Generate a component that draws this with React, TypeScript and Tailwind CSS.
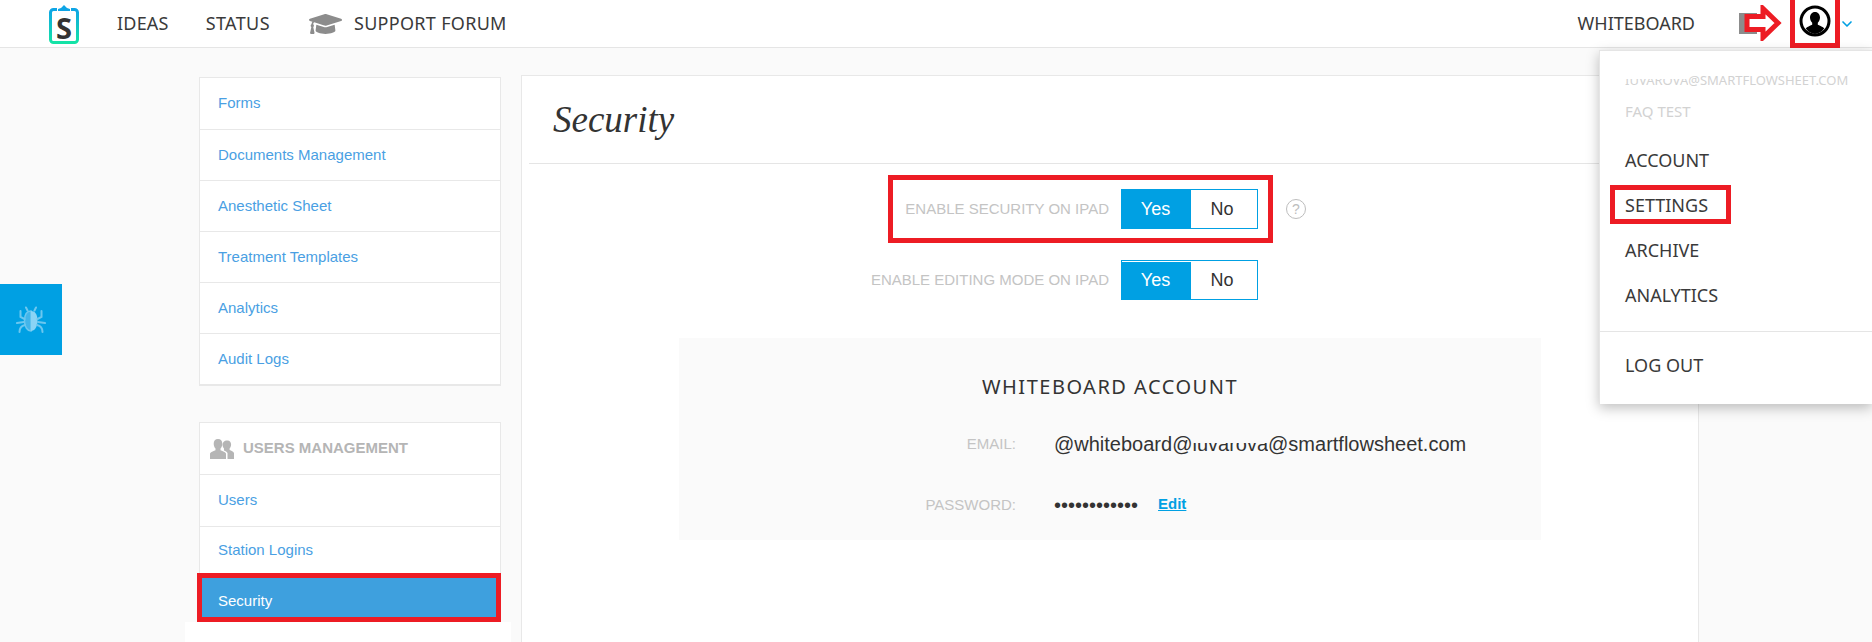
import { ChevronDown } from 'lucide-react';
import { FaGraduationCap } from 'react-icons/fa';

const formLinks = ['Forms', 'Documents Management', 'Anesthetic Sheet', 'Treatment Templates', 'Analytics', 'Audit Logs'];
const menuLinks = ['ARCHIVE', 'ANALYTICS'];

function Logo() {
  return (
    <div className="relative flex h-[40px] w-[30px] items-center justify-center">
      <svg viewBox="0 0 30 40" className="absolute inset-0 h-full w-full">
        <defs>
          <linearGradient id="logoGrad" x1="0" y1="0" x2="0" y2="1">
            <stop offset="0" stopColor="#0ea5e6" />
            <stop offset="1" stopColor="#14e3a6" />
          </linearGradient>
        </defs>
        <path d="M8 5.500H4.500a3 3 0 0 0-3 3v27a3 3 0 0 0 3 3h21a3 3 0 0 0 3-3v-27a3 3 0 0 0-3-3H22" fill="none" stroke="url(#logoGrad)" strokeWidth="3" />
        <path d="M9 7V5l3-1 3-3 3 3 3 1v2z" fill="#0ea5e6" />
      </svg>
      <span className="mt-[7px] font-['Noto_Sans',sans-serif] text-[29px] leading-none font-bold text-[#333]">S</span>
    </div>
  );
}

function BugIcon() {
  return (
    <svg viewBox="0 0 30 28" className="h-[28px] w-[30px]" fill="none" stroke="#6cc7ef" strokeWidth="2" strokeLinecap="round">
      <path d="M15 5c-4 0-6.500 3-6.500 10 0 6 3 10 6.500 10z" fill="#42b5ea" stroke="#6cc7ef" strokeWidth="1.500" />
      <path d="M15 5c4 0 6.500 3 6.500 10 0 6-3 10-6.500 10z" fill="#8ad4f5" stroke="none" />
      <path d="M10 1.500l1.500 3M20 1.500l-1.500 3M4.500 5v6l4 2M25.500 5v6l-4 2M1 17l7-1M29 17l-7-1M3.500 26c0-3 1.500-6 5.500-7M26.500 26c0-3-1.500-6-5.500-7" />
    </svg>
  );
}

function UsersIcon() {
  return (
    <svg viewBox="0 0 24 20" className="mr-[9px] h-[20px] w-[24px]" fill="#b5b5b5">
      <path d="M8 0c2.800 0 4.300 2 4.300 4.800 0 2-.8 3.800-1.800 4.800v1.600c2.500 1 4.800 1.800 5.500 3.300V20H0v-5.500c.7-1.500 3-2.300 5.500-3.300V9.600C4.500 8.600 3.700 6.800 3.700 4.800 3.700 2 5.200 0 8 0z" />
      <path d="M17.500 1.500c2.400 0 3.600 1.700 3.600 4 0 1.700-.7 3.200-1.500 4.100v1.500c1.800.8 3.800 1.500 4.400 2.800V20h-6.500v-6c-.6-1-2-1.800-3.500-2.400V9.600c-.8-.9-1.500-2.400-1.500-4.100 0-2.300 2-4 4-4z" />
    </svg>
  );
}

function ProfileIcon() {
  return (
    <svg viewBox="0 0 32 32" className="h-[32px] w-[32px]">
      <circle cx="16" cy="16" r="14" fill="#fff" stroke="#000" strokeWidth="3" />
      <path d="M16 7c3.200 0 5 2.500 5 5.500 0 2.200-1 4-2.200 5.200v2c2.500 1.200 5 2 6.500 3.800A14 14 0 0 1 16 29a14 14 0 0 1-9.300-5.500c1.500-1.800 4-2.600 6.500-3.800v-2C12 16.500 11 14.700 11 12.500 11 9.500 12.800 7 16 7z" fill="#000" />
    </svg>
  );
}

function Toggle({ inset }: { inset?: boolean }) {
  return (
    <div className="flex h-[40px] w-[137px] border border-[#00a0e3] font-['Liberation_Sans',sans-serif] text-[18px]">
      <div className={`flex w-[69px] items-center justify-center bg-[#00a0e3] pr-[2px] text-white ${inset ? 'mt-[1px]' : ''}`}>Yes</div>
      <div className="flex flex-1 items-center justify-center bg-white pr-[4px] text-[#333]">No</div>
    </div>
  );
}

export default function App() {
  return (
    <div className="relative h-[642px] w-[1872px] overflow-hidden bg-[#fafafa] font-['Liberation_Sans',sans-serif]">
      {/* Header */}
      <header className="flex h-[48px] items-center border-b border-[#e5e5e5] bg-white pl-[49px] font-['Noto_Sans',sans-serif] text-[18px] text-[#3a3a3a]">
        <Logo />
        <span className="ml-[38px] tracking-[0.2px]">IDEAS</span>
        <span className="ml-[37px] tracking-[0.4px]">STATUS</span>
        <FaGraduationCap className="mr-[12px] ml-[39px] h-[32px] w-[33px] text-[#8c8c8c]" />
        <span className="tracking-[0.3px]">SUPPORT FORUM</span>
        <span className="ml-auto">WHITEBOARD</span>
        <div className="ml-[44px] h-[21px] w-[18px] bg-[#8c8c8c]" />
        <div className="ml-[33px] flex h-[48px] w-[50px] items-center justify-center border-[5px] border-t-0 border-[#ed1c24]">
          <ProfileIcon />
        </div>
        <ChevronDown className="mr-[17px] -ml-[1px] h-[16px] w-[16px] text-[#00a0e3]" strokeWidth={2.5} />
      </header>

      {/* Annotation arrow */}
      <svg viewBox="0 0 38 36" className="absolute top-[5px] left-[1744px] h-[36px] w-[38px]">
        <path d="M3 11.500h16V3.500l15 14.500-15 14.500v-8H3z" fill="#fff" stroke="#ed1c24" strokeWidth="5" />
      </svg>

      {/* Bug report tab */}
      <div className="absolute top-[284px] left-0 flex h-[71px] w-[62px] items-center justify-center bg-[#00a0e3]">
        <BugIcon />
      </div>

      <div className="flex pl-[199px]">
        {/* Sidebar */}
        <aside className="mt-[29px] flex w-[302px] flex-col gap-[36px]">
          <div className="border border-b-2 border-[#e8e8e8] bg-white">
            {formLinks.map((link, i) => (
              <div key={link} className={`flex h-[51px] items-center pl-[18px] text-[15px] text-[#4a9fe3] ${i > 0 ? 'border-t border-[#e8e8e8]' : ''}`}>
                {link}
              </div>
            ))}
          </div>
          <div className="border border-b-0 border-[#e8e8e8] bg-white">
            <div className="flex h-[51px] items-center pl-[10px] text-[15px] font-bold text-[#b5b5b5]">
              <UsersIcon />
              USERS MANAGEMENT
            </div>
            <div className="flex h-[52px] items-center border-t border-[#e8e8e8] pl-[18px] text-[15px] text-[#4a9fe3]">Users</div>
            <div className="flex h-[47px] items-center border-t border-[#e8e8e8] pl-[18px] text-[15px] text-[#4a9fe3]">Station Logins</div>
            <div className="-mr-[1px] -ml-[3px] flex h-[49px] items-center border-[5px] border-[#ed1c24] bg-[#3ea0de] pt-[8px] pl-[16px] text-[15px] text-white">Security</div>
          </div>
        </aside>

        {/* Main panel */}
        <main className="mt-[27px] ml-[20px] h-[600px] w-[1178px] border border-[#e8e8e8] bg-white">
          <div className="mx-[7px] flex h-[88px] items-center border-b border-[#e5e5e5] pl-[24px] font-['Liberation_Serif',serif] text-[37px] text-[#333] italic">
            Security
          </div>

          <div className="relative mt-[25px] flex items-center">
            <div className="w-[587px] text-right text-[15px] text-[#c4c4c4]">ENABLE SECURITY ON IPAD</div>
            <div className="ml-[12px]"><Toggle /></div>
            <div className="ml-[28px] flex h-[20px] w-[20px] items-center justify-center rounded-full border border-[#bdbdbd] text-[14px] text-[#bdbdbd]">?</div>
            <div className="absolute -top-[14px] left-[366px] h-[68px] w-[385px] border-[5px] border-[#ed1c24]" />
          </div>

          <div className="mt-[31px] flex items-center">
            <div className="w-[587px] text-right text-[15px] text-[#c4c4c4]">ENABLE EDITING MODE ON IPAD</div>
            <div className="ml-[12px]"><Toggle inset /></div>
          </div>

          {/* Whiteboard account */}
          <div className="mt-[38px] ml-[157px] h-[202px] w-[862px] bg-[#fafafa]">
            <div className="pt-[35px] text-center font-['Noto_Sans',sans-serif] text-[20px] leading-[27px] tracking-[1.500px] text-[#333]">WHITEBOARD ACCOUNT</div>
            <div className="mt-[31px] flex h-[26px] items-center">
              <div className="w-[337px] text-right text-[15px] text-[#c4c4c4]">EMAIL:</div>
              <div className="ml-[38px] text-[20px] whitespace-nowrap text-[#333]">
                @whiteboard@<span className="[clip-path:inset(45%_0_0_0)]">iuvarova</span>@smartflowsheet.com
              </div>
            </div>
            <div className="mt-[35px] flex h-[26px] items-center">
              <div className="w-[337px] text-right text-[15px] text-[#c4c4c4]">PASSWORD:</div>
              <div className="ml-[38px] text-[20px] text-[#333]">••••••••••••</div>
              <a className="ml-[20px] -mt-[2px] text-[15px] font-bold text-[#00a0e3] underline">Edit</a>
            </div>
          </div>
        </main>
      </div>

      {/* White patch under the sidebar */}
      <div className="absolute top-[622px] left-[185px] h-[20px] w-[326px] bg-white" />

      {/* Account dropdown */}
      <div className="absolute top-[50px] right-0 h-[354px] w-[273px] border-l border-t border-[#e5e5e5] bg-white pt-[18px] font-['Noto_Sans',sans-serif] shadow-[0_4px_12px_rgba(0,0,0,0.25)]">
        <div className="flex h-[24px] items-center pl-[25px] text-[13px] text-[#d2d2d2]">
          <span className="[clip-path:inset(40%_0_0_0)]">IUVAROVA</span>@SMARTFLOWSHEET.COM
        </div>
        <div className="mt-[6px] flex h-[24px] items-center pl-[25px] text-[15px] text-[#d2d2d2]">FAQ TEST</div>
        <div className="mt-[25px] flex h-[24px] items-center pl-[25px] text-[18px] text-[#3a3a3a]">ACCOUNT</div>
        <div className="relative mt-[21px] flex h-[24px] items-center pl-[25px] text-[18px] text-[#3a3a3a]">
          SETTINGS
          <div className="absolute -top-[8px] left-[10px] h-[39px] w-[121px] border-[5px] border-[#ed1c24]" />
        </div>
        <div className="mt-[21px] flex h-[24px] items-center pl-[25px] text-[18px] text-[#3a3a3a]">{menuLinks[0]}</div>
        <div className="mt-[21px] flex h-[24px] items-center pl-[25px] text-[18px] text-[#3a3a3a]">{menuLinks[1]}</div>
        <div className="mt-[24px] border-t border-[#e5e5e5]" />
        <div className="mt-[21px] flex h-[24px] items-center pl-[25px] text-[18px] text-[#3a3a3a]">LOG OUT</div>
      </div>
    </div>
  );
}
